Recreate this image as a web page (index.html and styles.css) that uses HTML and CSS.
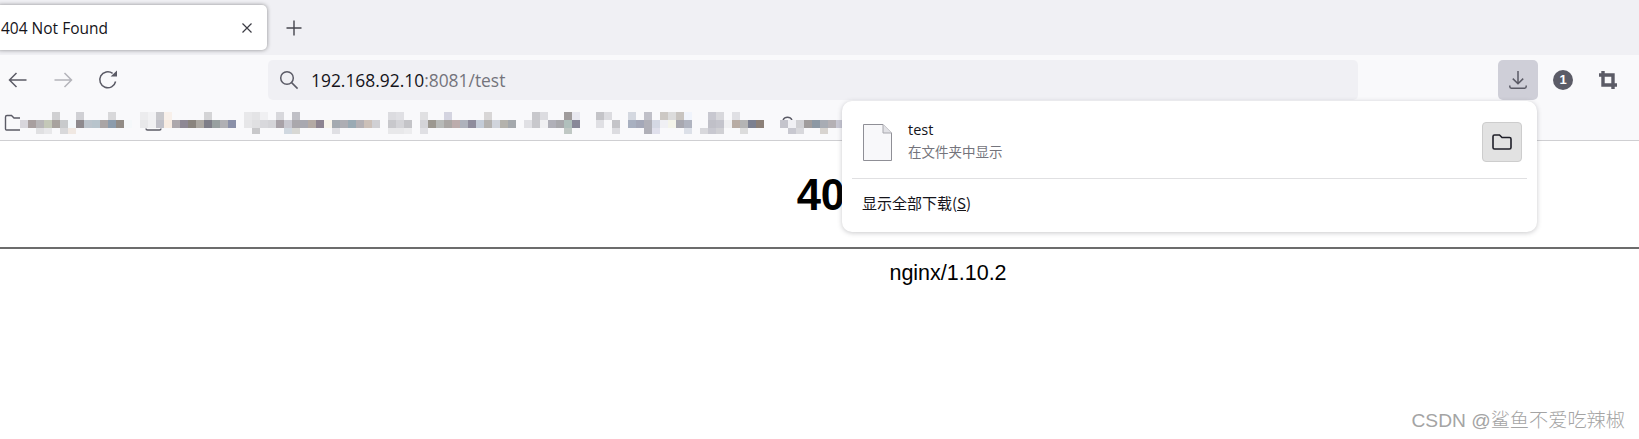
FILE: index.html
```html
<!DOCTYPE html>
<html lang="zh-CN">
<head>
<meta charset="utf-8">
<title>404 Not Found</title>
<link rel="stylesheet" href="styles.css">
</head>
<body>
<div class="chrome">
  <div class="tabstrip">
    <div class="tab">
      <span class="tab-title">404 Not Found</span>
      <svg class="tab-close" width="12" height="12" viewBox="0 0 12 12"><path d="M1.5 1.5l9 9M10.5 1.5l-9 9"/></svg>
    </div>
    <svg class="new-tab" width="16" height="16" viewBox="0 0 16 16"><path d="M8 0.5v15M0.5 8h15"/></svg>
  </div>
  <div class="toolbar">
    <div class="nav">
      <button class="nav-btn"><svg width="20" height="18" viewBox="0 0 20 18"><path class="ico" d="M18.5 9H1.5M8.5 2L1.5 9l7 7"/></svg></button>
      <button class="nav-btn"><svg width="20" height="18" viewBox="0 0 20 18"><path class="ico-dim" d="M1.5 9h17M11.5 2l7 7-7 7"/></svg></button>
      <button class="nav-btn"><svg width="20" height="20" viewBox="0 0 20 20"><path class="ico" d="M17.6 11.5A8 8 0 1 1 14.6 3.4"/><path class="ico-fill" d="M12.6 6.6h6.4V0.4z"/></svg></button>
    </div>
    <div class="urlbar">
      <svg class="search" width="20" height="20" viewBox="0 0 20 20"><circle class="ico" cx="8" cy="8" r="6.3"/><path class="ico" d="M12.6 12.6l6 6"/></svg>
      <span class="url"><span class="url-host">192.168.92.10</span>:8081/test</span>
    </div>
    <div class="actions">
      <button class="act act-on"><svg width="20" height="20" viewBox="0 0 20 20"><path class="ico" d="M10 1v12.5M4.8 8.6l5.2 5.2 5.2-5.2M1.8 15.4v1.2a1.6 1.6 0 0 0 1.6 1.6h13.2a1.6 1.6 0 0 0 1.6-1.6v-1.2"/></svg></button>
      <button class="act"><span class="badge">1</span></button>
      <button class="act"><svg width="20" height="20" viewBox="0 0 20 20"><path class="crop" d="M5 1v14h14M1 5h14v14"/></svg></button>
    </div>
  </div>
  <div class="bookmarks">
    <svg class="mosaic" width="842" height="40" viewBox="0 0 842 40">
      <path class="ico-bm" d="M5.5 29V17a1.5 1.5 0 0 1 1.5-1.5h4.5l2.5 2.5h6M5.5 29a1 1 0 0 0 1 1H20"/>
      <path class="ico-bm" d="M146 28.5a1.5 1.5 0 0 0 1.5 1.5h12a1.5 1.5 0 0 0 1.5-1.5"/>
      <path class="ico-bm" d="M783 20a5 5 0 0 1 9 0"/>
      <g class="row-top">
        <rect x="52" fill="#d0d0d2"/><rect x="76" fill="#d0d0d4"/><rect x="108" fill="#d8d8da"/>
        <rect x="140" fill="#ececee"/><rect x="148" fill="#f2f2f4"/><rect x="156" fill="#c8c8cc"/><rect x="164" fill="#f8f0ea"/><rect x="204" fill="#d4d4d6"/>
        <rect x="244" fill="#e8e8ea"/><rect x="252" fill="#e4e4e6"/><rect x="260" fill="#f0f0f2"/><rect x="276" fill="#d8d8dc"/><rect x="292" fill="#c0c0c6"/>
        <rect x="388" fill="#dcdce0"/><rect x="396" fill="#e0e0e4"/><rect x="420" fill="#e0e0e2"/><rect x="444" fill="#d4d4e0"/><rect x="484" fill="#d8d6d6"/>
        <rect x="532" fill="#c8c8cc"/><rect x="540" fill="#dcdce0"/><rect x="564" fill="#a09c9c"/><rect x="572" fill="#e8e8f0"/>
        <rect x="596" fill="#c4c4c8"/><rect x="604" fill="#dcdce0"/><rect x="628" fill="#d4d8e0"/><rect x="644" fill="#c0c0c8"/>
        <rect x="660" fill="#ccc8c4"/><rect x="668" fill="#dcdcdc"/><rect x="676" fill="#c8c4c0"/><rect x="684" fill="#f0f4fc"/>
        <rect x="708" fill="#c8c8d0"/><rect x="716" fill="#d8d8dc"/><rect x="732" fill="#e0e0e4"/>
      </g>
      <g class="row-main">
        <rect x="20" fill="#d8d6dc"/><rect x="28" fill="#a89f9f"/><rect x="36" fill="#b8b6b8"/><rect x="44" fill="#c4c8b8"/><rect x="52" fill="#a8a29e"/><rect x="60" fill="#c8cacc"/><rect x="68" fill="#f4f8fb"/><rect x="76" fill="#8e8a8e"/><rect x="84" fill="#bcc4cc"/><rect x="92" fill="#b8c4cc"/><rect x="100" fill="#aaa5a5"/><rect x="108" fill="#8c9cac"/><rect x="116" fill="#928c86"/><rect x="124" fill="#f5f8fa"/>
        <rect x="140" fill="#e8e8ea"/><rect x="148" fill="#f0f0f2"/><rect x="156" fill="#c0c0c8"/><rect x="164" fill="#f8ece2"/><rect x="172" fill="#ada8ac"/><rect x="180" fill="#8e8894"/><rect x="188" fill="#8a847e"/><rect x="196" fill="#aca8a2"/><rect x="204" fill="#7e7e88"/><rect x="212" fill="#98a0a0"/><rect x="220" fill="#b0b0b4"/><rect x="228" fill="#8a90a8"/>
        <rect x="244" fill="#e6e6e8"/><rect x="252" fill="#e0e0e2"/><rect x="260" fill="#d8d8dc"/><rect x="268" fill="#d4d4d8"/><rect x="276" fill="#a8a2a8"/><rect x="284" fill="#c8c8d0"/><rect x="292" fill="#aaa8ac"/>
        <rect x="300" fill="#a8a8b0"/><rect x="308" fill="#b4aaa4"/><rect x="316" fill="#8e8490"/><rect x="324" fill="#f8f4ea"/><rect x="332" fill="#a4aab0"/><rect x="340" fill="#aeaeb4"/><rect x="348" fill="#9aaab4"/><rect x="356" fill="#b4b0b4"/><rect x="364" fill="#ccc0b8"/><rect x="372" fill="#d0d0d4"/>
        <rect x="388" fill="#c8c8cc"/><rect x="396" fill="#d4d4d8"/><rect x="404" fill="#c4c4c8"/>
        <rect x="420" fill="#d4d4d8"/><rect x="428" fill="#9c9890"/><rect x="436" fill="#b8bab8"/><rect x="444" fill="#aaa6a4"/><rect x="452" fill="#bcacac"/><rect x="460" fill="#aeb2bc"/><rect x="468" fill="#8e8c9c"/><rect x="476" fill="#c4ccd8"/><rect x="484" fill="#b4b2b0"/><rect x="492" fill="#d0d4dc"/><rect x="500" fill="#b4b2ac"/><rect x="508" fill="#a4a8ac"/>
        <rect x="524" fill="#e0e0e4"/><rect x="532" fill="#c8c8cc"/><rect x="540" fill="#f0f0f2"/><rect x="548" fill="#b0b0b8"/><rect x="556" fill="#a8a8ac"/><rect x="564" fill="#b0c0bc"/><rect x="572" fill="#888898"/>
        <rect x="596" fill="#e0e0e4"/><rect x="612" fill="#c4c4c8"/>
        <rect x="628" fill="#a8b0c0"/><rect x="636" fill="#a4a8b8"/><rect x="644" fill="#b0b0b8"/><rect x="652" fill="#d4d8e4"/><rect x="660" fill="#f0f0f4"/><rect x="668" fill="#f4f4ea"/><rect x="676" fill="#a8a8b0"/><rect x="684" fill="#b0b4c0"/>
        <rect x="708" fill="#c0c0c8"/><rect x="716" fill="#c4c4cc"/><rect x="724" fill="#f0f0f2"/><rect x="732" fill="#b8aca4"/><rect x="740" fill="#b4b4b4"/><rect x="748" fill="#7c8090"/><rect x="756" fill="#8c8078"/>
        <rect x="780" fill="#c4c4cc"/><rect x="788" fill="#f0f0f4"/><rect x="796" fill="#d0d0d4"/><rect x="804" fill="#a09c9c"/><rect x="812" fill="#8c98a4"/><rect x="820" fill="#a8acb4"/><rect x="828" fill="#b4b0b4"/><rect x="836" fill="#c8c8d4"/>
      </g>
      <g class="row-low">
        <rect x="36" fill="#e0e0e2"/><rect x="44" fill="#e8e8ea"/><rect x="60" fill="#d8d8da"/><rect x="68" fill="#f0e8e2"/>
        <rect x="252" fill="#c8c8ca"/><rect x="284" fill="#d0d8e0"/><rect x="292" fill="#d8d8d4"/><rect x="332" fill="#e0e0e4"/>
        <rect x="388" fill="#e8e8ea"/><rect x="396" fill="#e8e8ea"/><rect x="404" fill="#ececee"/><rect x="420" fill="#e0e0e4"/>
        <rect x="564" fill="#c0c8c4"/><rect x="612" fill="#dcdce0"/><rect x="644" fill="#b0b0b8"/><rect x="652" fill="#e0e0ec"/><rect x="684" fill="#dce0e8"/>
        <rect x="700" fill="#d8d8dc"/><rect x="708" fill="#c8c8d0"/><rect x="716" fill="#d0d0d4"/><rect x="740" fill="#dcdcdc"/>
        <rect x="788" fill="#c8c8d0"/><rect x="796" fill="#d8d8dc"/><rect x="820" fill="#d8d4d0"/>
      </g>
    </svg>
  </div>
</div>
<main class="page">
  <h1 class="title">404 Not Found</h1>
  <hr class="rule">
  <p class="server">nginx/1.10.2</p>
</main>
<aside class="popup">
  <div class="dl-item">
    <svg class="file" width="29" height="37" viewBox="0 0 29 37"><path class="file-body" d="M0.5 0.5H20L28.500 9V36.500H0.500z"/><path class="file-fold" d="M20 0.500V9H28.500"/></svg>
    <div class="dl-text">
      <div class="dl-name">test</div>
      <div class="dl-sub">在文件夹中显示</div>
    </div>
    <button class="folder-btn"><svg width="20" height="16" viewBox="0 0 20 16"><path class="folder-ico" d="M1 13.500V2.500A1.500 1.500 0 0 1 2.500 1h5l2.500 2.500h7.500A1.500 1.500 0 0 1 19 5v8.500a1.500 1.500 0 0 1-1.500 1.500h-15A1.500 1.500 0 0 1 1 13.500z"/></svg></button>
  </div>
  <div class="dl-foot">显示全部下载(<span class="key">S</span>)</div>
</aside>
<div class="watermark">CSDN @鲨鱼不爱吃辣椒</div>
</body>
</html>
```

FILE: styles.css
```css
* { box-sizing: border-box; }
html, body { margin: 0; padding: 0; height: 100%; background: #fff; overflow: hidden; }
body { font-family: "Open Sans", "Noto Sans CJK SC", sans-serif; color: #15141a; position: relative; }
button { border: 0; background: none; padding: 0; margin: 0; display: flex; align-items: center; justify-content: center; }

.tabstrip { height: 55px; background: #f0f0f4; display: flex; align-items: center; }
.tab { width: 271px; height: 45px; margin-left: -4px; padding: 0 14px 0 5px; background: #fff; border-radius: 5px; box-shadow: 0 0 4px rgba(0,0,0,.42); display: flex; align-items: center; justify-content: space-between; }
.tab-title { font-size: 15.5px; white-space: nowrap; }
.tab-close path { fill: none; stroke: #3c3c44; stroke-width: 1.2; }
.new-tab { margin-left: 19px; }
.new-tab path { fill: none; stroke: #45454d; stroke-width: 1.4; }

.toolbar { height: 45px; padding-top: 5px; background: #f9f9fb; display: flex; }
.nav { width: 268px; display: flex; gap: 9px; }
.nav-btn { width: 36px; height: 40px; }
.ico { fill: none; stroke: #5b5b66; stroke-width: 1.5; }
.ico-dim { fill: none; stroke: #b4b4ba; stroke-width: 1.5; }
.ico-fill { fill: #5b5b66; }
.urlbar { width: 1090px; height: 40px; background: #f0f0f4; border-radius: 5px; display: flex; align-items: center; padding-left: 11px; }
.search { flex: none; }
.url { margin-left: 12px; font-size: 17.4px; font-family: "Open Sans", sans-serif; color: #74747c; }
.url-host { color: #15141a; }
.actions { margin-left: 140px; display: flex; gap: 5px; }
.act { width: 40px; height: 40px; border-radius: 5px; }
.act-on { background: #cfcfd8; }
.badge { width: 20px; height: 20px; border-radius: 50%; background: #5b5b66; color: #fff; font: bold 13px/20px "Liberation Sans", sans-serif; text-align: center; }
.crop { fill: none; stroke: #5b5b66; stroke-width: 3.4; }

.bookmarks { height: 41px; background: #f9f9fb; border-bottom: 1px solid #cfcfd2; }
.mosaic { display: block; }
.mosaic rect { width: 8px; height: 8px; }
.row-top rect { y: 12px; }
.row-main rect { y: 20px; }
.row-low rect { y: 28px; height: 6px; }
.ico-bm { fill: none; stroke: #5b5b66; stroke-width: 1.4; }

.page { width: 1896px; text-align: center; font-family: "Liberation Sans", Arial, sans-serif; color: #000; }
.title { margin: 29px 0 0; font-size: 43.6px; line-height: 50px; font-weight: bold; }
.rule { margin: 27px 0 0; height: 2px; border: 0; background: #6c6c6c; }
.server { margin: 12px 0 0; font-size: 21.5px; line-height: 25px; }

.popup { position: absolute; left: 842px; top: 101px; width: 695px; height: 131px; background: #fff; border-radius: 10px; box-shadow: 0 1px 5px rgba(60,60,70,.28); }
.dl-item { height: 78px; margin: 0 10px; padding: 5px 5px 0 11px; border-bottom: 1px solid #e0e0e2; display: flex; align-items: center; }
.file { flex: none; }
.file-body { fill: #f8f8fa; stroke: #8f8f96; }
.file-fold { fill: #e2e2e6; stroke: #a8a8ae; }
.dl-text { margin: 0 0 3px 16px; flex: 1; }
.dl-name { font-size: 14.5px; line-height: 20px; }
.dl-sub { margin-top: 1px; font-size: 13.5px; line-height: 20px; color: #74747c; font-family: "Noto Sans CJK SC", sans-serif; }
.folder-btn { width: 40px; height: 40px; background: #e2e2e2; border: 1px solid #cdcdcd; border-radius: 4px; }
.folder-ico { fill: none; stroke: #1f1f28; stroke-width: 1.6; }
.dl-foot { height: 52px; padding-left: 20px; font-size: 15px; line-height: 48px; font-family: "Noto Sans CJK SC", sans-serif; }
.key { text-decoration: underline; }

.watermark { position: absolute; right: 14px; top: 407px; font-size: 19.2px; line-height: 28px; color: #a4a4a4; font-family: "Liberation Sans", "Noto Sans CJK SC", sans-serif; font-weight: 300; }
```
